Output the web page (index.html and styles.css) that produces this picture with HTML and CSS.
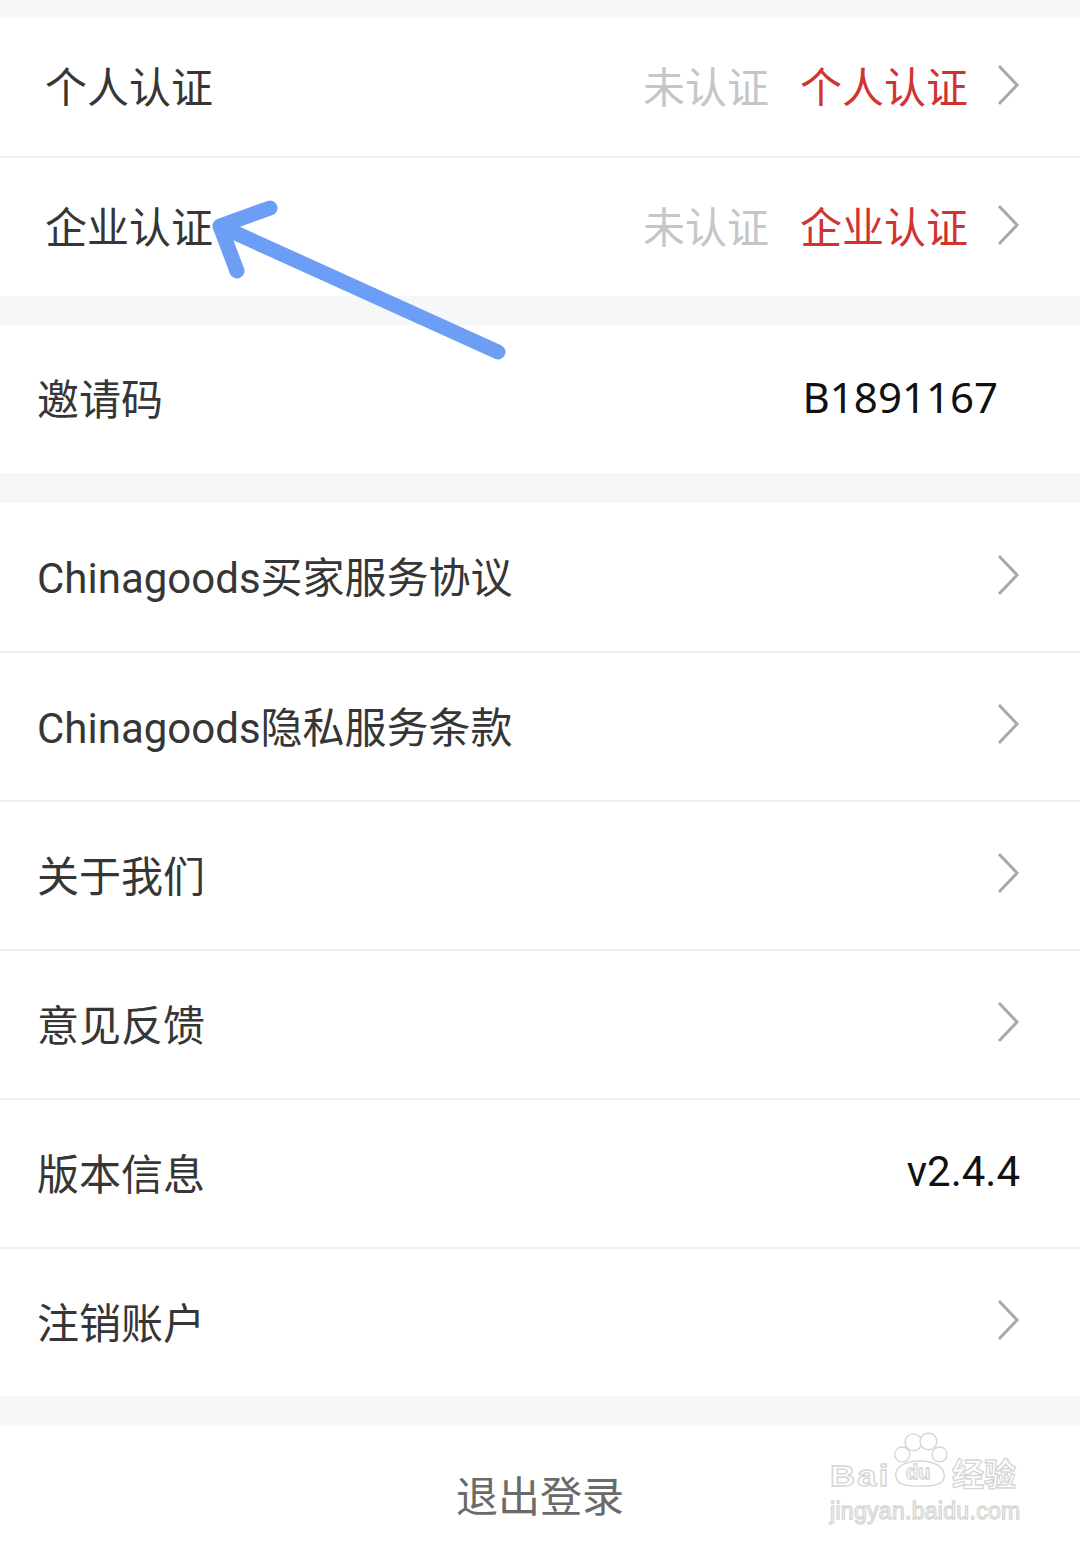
FILE: index.html
```html
<!DOCTYPE html>
<html lang="zh-CN">
<head>
    <meta charset="UTF-8">
    <meta name="viewport" content="width=device-width, initial-scale=1.0">
    <title>设置</title>
    <link rel="stylesheet" href="styles.css">
</head>
<body>
<div class="page">

    <div class="gap gap-top"></div>

    <!-- 认证 -->
    <div class="group">
        <div class="row row-auth">
            <span class="label">个人认证</span>
            <div class="right">
                <span class="status">未认证</span>
                <span class="action">个人认证</span>
                <svg class="chevron" viewBox="0 0 24 42"><path d="M3 2 L21 21 L3 40"/></svg>
            </div>
        </div>
        <div class="row row-auth">
            <span class="label">企业认证</span>
            <div class="right">
                <span class="status">未认证</span>
                <span class="action">企业认证</span>
                <svg class="chevron" viewBox="0 0 24 42"><path d="M3 2 L21 21 L3 40"/></svg>
            </div>
        </div>
    </div>

    <div class="gap gap-29"></div>

    <div class="group">
        <div class="row row-invite">
            <span class="label">邀请码</span>
            <span class="code">B1891167</span>
        </div>
    </div>

    <div class="gap"></div>

    <div class="group">
        <div class="row row-list">
            <span class="label">Chinagoods买家服务协议</span>
            <svg class="chevron" viewBox="0 0 24 42"><path d="M3 2 L21 21 L3 40"/></svg>
        </div>
        <div class="row row-list">
            <span class="label">Chinagoods隐私服务条款</span>
            <svg class="chevron" viewBox="0 0 24 42"><path d="M3 2 L21 21 L3 40"/></svg>
        </div>
        <div class="row row-list">
            <span class="label">关于我们</span>
            <svg class="chevron" viewBox="0 0 24 42"><path d="M3 2 L21 21 L3 40"/></svg>
        </div>
        <div class="row row-list">
            <span class="label">意见反馈</span>
            <svg class="chevron" viewBox="0 0 24 42"><path d="M3 2 L21 21 L3 40"/></svg>
        </div>
        <div class="row row-list">
            <span class="label">版本信息</span>
            <span class="version">v2.4.4</span>
        </div>
        <div class="row row-list">
            <span class="label">注销账户</span>
            <svg class="chevron" viewBox="0 0 24 42"><path d="M3 2 L21 21 L3 40"/></svg>
        </div>
    </div>

    <div class="gap"></div>

    <div class="logout">退出登录</div>

    <!-- annotation arrow drawn over the screenshot -->
    <svg class="arrow" viewBox="0 0 1080 1549">
        <path d="M498 352 L220 226 M270 208 L220 226 L237 271"/>
    </svg>

    <!-- watermark -->
    <div class="watermark">
        <div class="wm-top">
            <span class="wm-bai">Bai</span>
            <span class="wm-paw">
                <svg viewBox="0 0 60 60">
                    <circle cx="11" cy="24" r="8"/>
                    <circle cx="23" cy="11" r="9"/>
                    <circle cx="39" cy="10" r="9"/>
                    <circle cx="51" cy="24" r="8"/>
                    <path d="M4 46 C4 36 16 31 30 31 C45 31 56 37 56 47 C56 57 44 58 30 58 C14 58 4 56 4 46 Z"/>
                </svg>
                <span class="wm-du">du</span>
            </span>
            <span class="wm-cn">经验</span>
        </div>
        <div class="wm-url">jingyan.baidu.com</div>
    </div>

</div>
</body>
</html>
```

FILE: styles.css
```css
body {
    margin: 0;
    background-color: #f6f7f8;
    font-family: Roboto, "Noto Sans CJK SC", sans-serif;
}

.page {
    position: relative;
    width: 1080px;
    height: 1549px;
    overflow: hidden;
}

.gap {
    height: 30px;
}

.gap-top {
    height: 18px;
}

.gap-29 {
    height: 29px;
}

.group {
    background-color: #fff;
}

.row {
    display: flex;
    align-items: center;
    justify-content: space-between;
    box-sizing: border-box;
    padding: 0 60px 5px 37px;
}

.row + .row {
    border-top: 2px solid #eeeeee;
}

.row-auth {
    height: 140px;
    padding-left: 45px;
}

.row-auth:first-child {
    height: 138px;
}

.row-invite {
    height: 148px;
    padding-right: 82px;
}

.row-list {
    height: 149px;
}

.row-list:first-child {
    height: 148px;
}

.label {
    font-size: 42px;
    color: #363636;
}

.right {
    display: flex;
    align-items: center;
}

.status {
    font-size: 42px;
    color: #c6c6c6;
    margin-right: 31px;
}

.action {
    font-size: 42px;
    color: #cf3431;
    margin-right: 28px;
}

.chevron {
    width: 24px;
    height: 42px;
    fill: none;
    stroke: #a9a9a9;
    stroke-width: 3px;
}

.code {
    font-family: "Noto Sans", sans-serif;
    font-size: 42px;
    color: #111;
}

.version {
    font-size: 42px;
    color: #111;
}

.logout {
    height: 140px;
    box-sizing: border-box;
    padding-bottom: 6px;
    background-color: #fff;
    display: flex;
    align-items: center;
    justify-content: center;
    font-size: 42px;
    color: #6a6a6a;
}

.arrow {
    position: absolute;
    top: 0;
    left: 0;
    width: 1080px;
    height: 1549px;
    pointer-events: none;
    fill: none;
    stroke: #6d9ef6;
    stroke-width: 15px;
    stroke-linecap: round;
    stroke-linejoin: round;
}

.watermark {
    position: absolute;
    left: 830px;
    top: 1430px;
    width: 192px;
    color: #fff;
    -webkit-text-stroke: 1.3px #d6d6d6;
    pointer-events: none;
}

.wm-top {
    display: flex;
    align-items: flex-end;
    height: 60px;
}

.wm-bai {
    font-family: "Liberation Sans", sans-serif;
    font-weight: bold;
    font-size: 30px;
    line-height: 28px;
    letter-spacing: 2px;
    transform: scaleX(1.15);
    transform-origin: left bottom;
    width: 62px;
}

.wm-paw {
    position: relative;
    width: 56px;
    height: 60px;
    margin-right: 4px;
}

.wm-paw svg {
    width: 56px;
    height: 60px;
    fill: #fff;
    stroke: #d6d6d6;
    stroke-width: 1.5px;
}

.wm-du {
    position: absolute;
    left: 14px;
    top: 31px;
    font-family: "Liberation Sans", sans-serif;
    font-weight: bold;
    font-size: 20px;
}

.wm-cn {
    font-family: "Noto Sans CJK SC", sans-serif;
    font-weight: bold;
    font-size: 32px;
    line-height: 36px;
}

.wm-url {
    font-family: "Liberation Sans", sans-serif;
    font-size: 23px;
    margin-top: 8px;
    letter-spacing: 0.3px;
}
```
